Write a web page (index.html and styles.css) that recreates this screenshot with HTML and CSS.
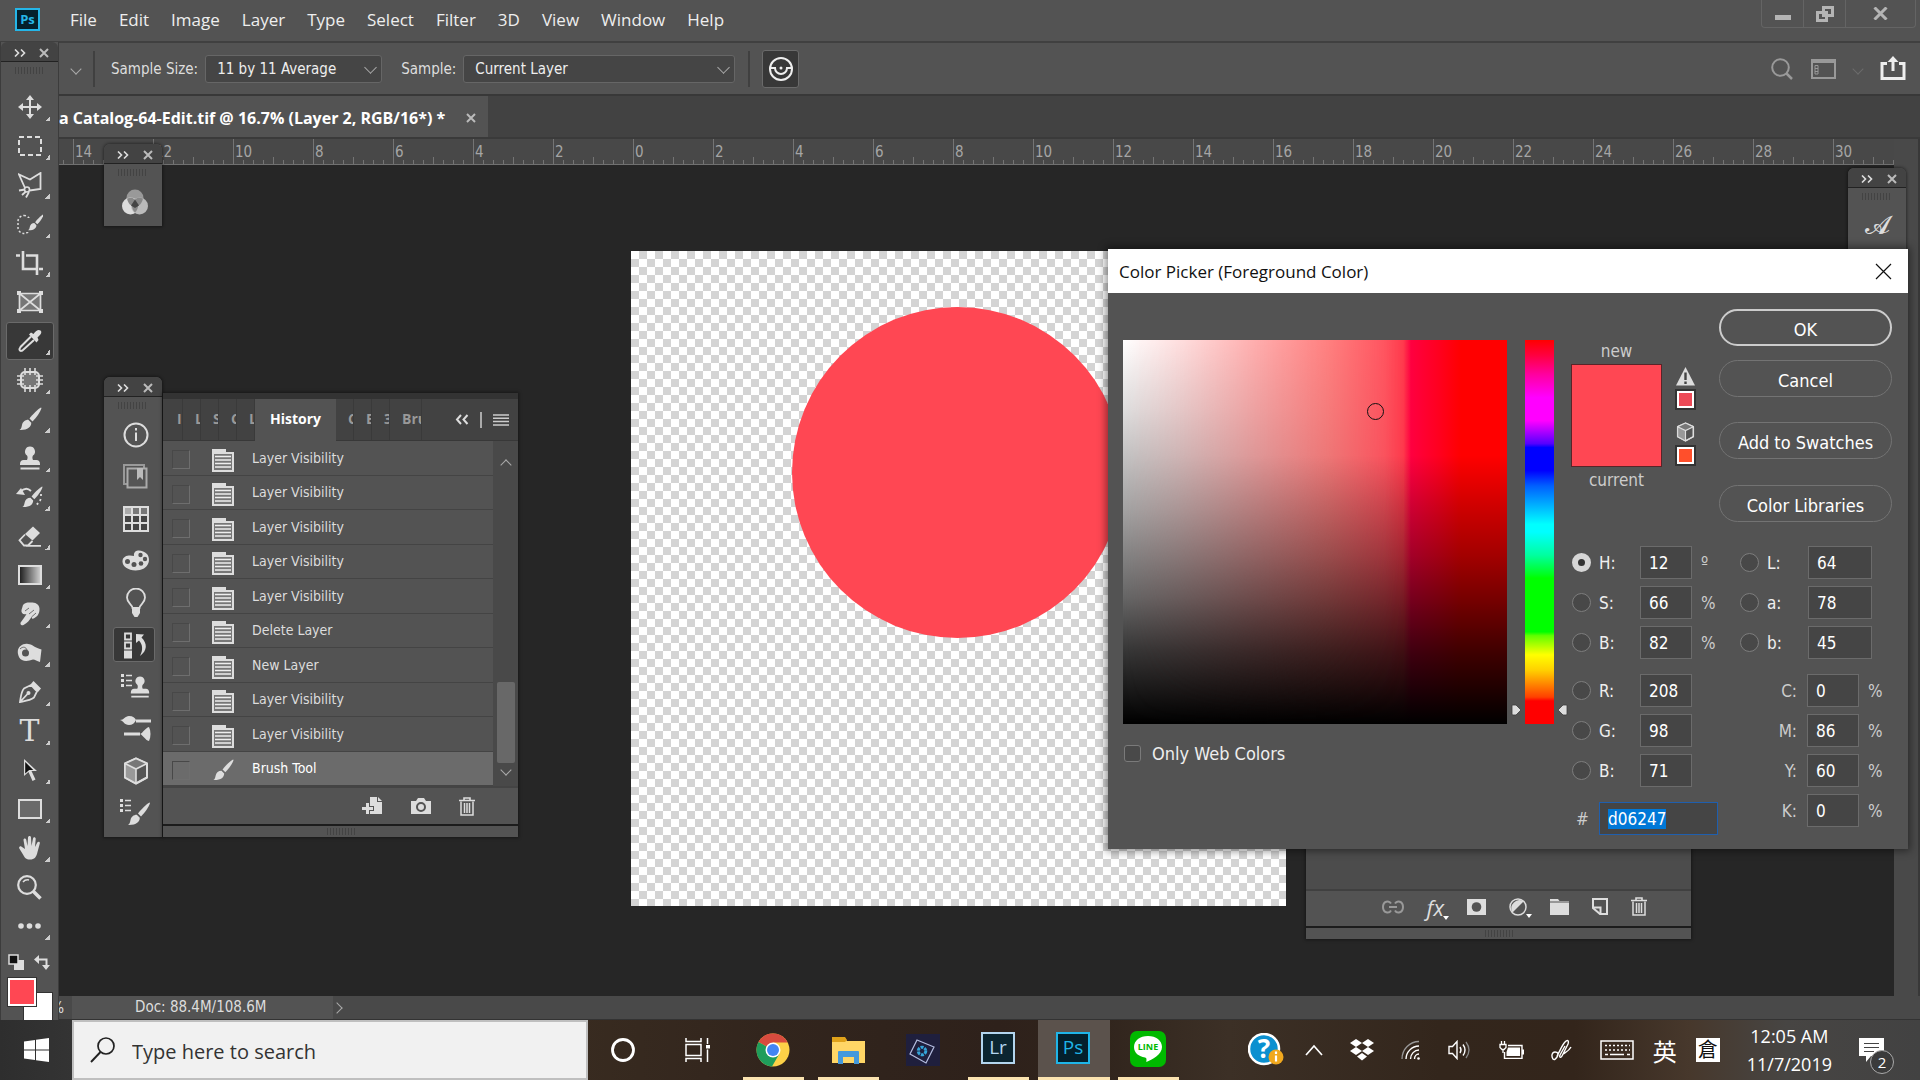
FILE: index.html
```html
<!DOCTYPE html>
<html lang="en">
  <head>
    <meta charset="UTF-8" />
    <meta name="viewport" content="width=device-width, initial-scale=1.0" />
    <title>Photoshop</title>
    <link rel="stylesheet" href="styles.css">
  </head>

  <body>
    <!-- shared icons -->
    <svg class="defs" width="0" height="0">
      <symbol id="i-state" viewBox="0 0 22 24">
        <path d="M0 1h14v3h8v20H0z" fill="#ddd" />
        <path d="M2 6h18v16H2z" fill="#777" />
        <path d="M3 8.500h16M3 12h16M3 15.500h16M3 19h16" stroke="#eee" stroke-width="1.300" />
      </symbol>
      <symbol id="i-brush" viewBox="0 0 24 24">
        <path d="M23 0.500c-3 1.500-9 7.500-11.500 11l3 3C18 11 22.500 5 23.500 1z" fill="#ddd" />
        <path d="M10.300 12.800l3 3c0 4-3.500 7.500-11.800 7.200 2-1.200 2-3 2.500-5 .7-3 3-5.200 6.300-5.200z" fill="#ddd" />
      </symbol>
      <symbol id="i-stamp" viewBox="0 0 24 24">
        <path d="M12 0.500a5 5 0 0 1 3 9c-.8 1-.8 3 0 4.500h3.500c2 0 3.500 1.500 3.500 4v1H2v-1c0-2.500 1.500-4 3.500-4H9c.8-1.500.8-3.500 0-4.500a5 5 0 0 1 3-9zM2.500 21.500h19v2h-19z" fill="#ddd" />
      </symbol>
      <symbol id="i-cube" viewBox="0 0 26 28">
        <path d="M13 1.500l11 5v14l-11 6-11-6v-14z" fill="#555" stroke="#ddd" stroke-width="2" stroke-linejoin="round" />
        <path d="M2 6.500l11 5.500v14.500L2 20.500z" fill="#999" />
        <path d="M2 6.500l11-5 11 5-11 5.500z" fill="#777" />
        <path d="M13 1.500l11 5v14l-11 6-11-6v-14zM2 6.500l11 5.500 11-5.500M13 12v14" fill="none" stroke="#ddd" stroke-width="1.600" />
      </symbol>
      <symbol id="i-trash" viewBox="0 0 16 19">
        <path d="M0 3.500h16M5 3V1h6v2" stroke="#ddd" stroke-width="1.600" fill="none" />
        <path d="M2 4.500v13.500h12V4.500M5.500 6v10M8 6v10M10.500 6v10" stroke="#ddd" stroke-width="1.500" fill="none" />
      </symbol>
      <symbol id="i-list" viewBox="0 0 11 13">
        <path d="M0 1.500h3M0 6.500h3M0 11.500h3" stroke="#ddd" stroke-width="3" />
        <path d="M5 1.500h6M5 6.500h6M5 11.500h6" stroke="#ddd" stroke-width="1.500" />
      </symbol>
      <symbol id="i-collapse" viewBox="0 0 12 8">
        <path d="M1 0.500l3.500 3.500L1 7.500M7 0.500l3.500 3.500L7 7.500" stroke="#ddd" stroke-width="1.600" fill="none" />
      </symbol>
      <symbol id="i-x" viewBox="0 0 10 10">
        <path d="M1 1l8 8M9 1l-8 8" stroke="#bbb" stroke-width="2" fill="none" />
      </symbol>
    </svg>

    <div class="app">
      <header class="menubar">
        <div class="ps-logo">Ps</div>
        <nav class="menu">
          <a href="#">File</a>
          <a href="#">Edit</a>
          <a href="#">Image</a>
          <a href="#">Layer</a>
          <a href="#">Type</a>
          <a href="#">Select</a>
          <a href="#">Filter</a>
          <a href="#">3D</a>
          <a href="#">View</a>
          <a href="#">Window</a>
          <a href="#">Help</a>
        </nav>
        <div class="window-buttons">
          <button aria-label="Minimize"><svg width="16" height="16"><path d="M0 9h16v5H0z" fill="#b4b4b4" /></svg></button>
          <button aria-label="Restore"><svg width="18" height="16"><path d="M7.500 1.500h9v8h-9zM1.500 6.500h9v8h-9z" fill="none" stroke="#b4b4b4" stroke-width="3" /></svg></button>
          <button class="wide" aria-label="Close"><svg width="15" height="13"><path d="M1.500 0.500l12 12M13.500 0.500l-12 12" stroke="#b4b4b4" stroke-width="3" /></svg></button>
        </div>
      </header>

      <div class="options">
        <span class="chevron"></span>
        <span class="divider"></span>
        <label for="sample-size">Sample Size:</label>
        <span class="select size"><select id="sample-size"><option>11 by 11 Average</option></select></span>
        <label for="sample">Sample:</label>
        <span class="select source"><select id="sample"><option>Current Layer</option></select></span>
        <span class="divider"></span>
        <button class="ring-button" aria-label="Show sampling ring">
          <svg width="26" height="26"><circle cx="13" cy="13" r="11" fill="none" stroke="#eee" stroke-width="2" /><path d="M2 12h5a6 6 0 0 0 12 0h5" fill="none" stroke="#eee" stroke-width="2" /><circle cx="13" cy="12" r="1.500" fill="#eee" /></svg>
        </button>
        <div class="options-right">
          <svg width="22" height="22"><circle cx="9.500" cy="9.500" r="8.300" fill="none" stroke="#999" stroke-width="2" /><path d="M15.500 15.500l5.500 5.500" stroke="#999" stroke-width="2.500" /></svg>
          <svg width="25" height="20"><path d="M1 1h23v18H1z" fill="none" stroke="#999" stroke-width="2" /><path d="M1 3h23" stroke="#999" stroke-width="2" /><path d="M4 6.500h3v8.500H4zM4 9.500h3M4 12.500h3" fill="none" stroke="#999" /></svg>
          <span class="chevron dim"></span>
          <svg width="26" height="25"><path d="M7 7.500H2v15h22v-15h-5" fill="none" stroke="#eee" stroke-width="3" /><path d="M13 15V4" stroke="#eee" stroke-width="3" /><path d="M7.500 6L13 0l5.500 6z" fill="#eee" /></svg>
        </div>
      </div>

      <div class="tabs">
        <div class="tab">a Catalog-64-Edit.tif @ 16.7% (Layer 2, RGB/16*) *
          <button aria-label="Close tab"><svg width="10" height="10"><use href="#i-x" /></svg></button>
        </div>
      </div>

      <div class="stage">
        <div class="document">
          <div class="ruler">
            <span>14</span><span>12</span><span>10</span><span>8</span><span>6</span><span>4</span><span>2</span><span>0</span><span>2</span><span>4</span><span>6</span><span>8</span><span>10</span><span>12</span><span>14</span><span>16</span><span>18</span><span>20</span><span>22</span><span>24</span><span>26</span><span>28</span><span>30</span>
          </div>
          <div class="workspace">
            <div class="artboard"><div class="circle"></div></div>
          </div>
        </div>
        <div class="vscroll"></div>
      </div>

      <div class="status">
        <span class="zoom">%</span>
        <span class="doc">Doc: 88.4M/108.6M</span>
        <span class="chevron right"></span>
      </div>

      <!-- tools -->
      <aside class="toolbox">
        <div class="panel-head"><svg width="12" height="8"><use href="#i-collapse" /></svg><svg width="10" height="10"><use href="#i-x" /></svg></div>
        <div class="grip"></div>
        <div class="tools">
          <button aria-label="Move"><svg width="24" height="24" viewBox="0 0 24 24"><path d="M12 3v18M3 12h18" stroke="#ddd" stroke-width="2" /><path d="M12 0l4 5H8zM12 24l4-5H8zM0 12l5-4v8zM24 12l-5-4v8z" fill="#ddd" /></svg></button>
          <button aria-label="Marquee"><svg width="24" height="20" viewBox="0 0 24 20"><rect x="1" y="1" width="22" height="18" fill="none" stroke="#ddd" stroke-width="2" stroke-dasharray="5 3" /></svg></button>
          <button aria-label="Lasso"><svg width="24" height="26" viewBox="0 0 24 26"><path d="M7 16L1 2.500l11 5L22.500 1v16l-11 1.500" fill="none" stroke="#ddd" stroke-width="1.800" /><circle cx="9" cy="17.500" r="2.500" fill="none" stroke="#ddd" stroke-width="1.600" /><path d="M1 18.500l6-1M4 23l4-3.500M11 20l-3 5.500" stroke="#ddd" stroke-width="1.800" /></svg></button>
          <button aria-label="Quick selection"><svg width="26" height="24" viewBox="0 0 26 24"><rect x="1" y="3.500" width="12" height="18" rx="6" fill="none" stroke="#ddd" stroke-width="1.500" stroke-dasharray="2 2" /><path d="M9 6h6v14H9z" fill="#535353" /><use href="#i-brush" x="10" y="0" width="17" height="21" /></svg></button>
          <button aria-label="Crop"><svg width="28" height="26" viewBox="0 0 28 26"><path d="M0 5.500h4M7 1v18h13M10 5.500h11V25M23 19h4" fill="none" stroke="#ddd" stroke-width="2.600" /></svg></button>
          <button class="plain" aria-label="Frame"><svg width="26" height="22" viewBox="0 0 26 22"><path d="M2.500 2.500h21v17h-21zM2.500 2.500l21 17M23.500 2.500l-21 17" fill="#777" stroke="#ddd" stroke-width="1.700" /><path d="M0 0h4v4H0zM22 0h4v4h-4zM0 18h4v4H0zM22 18h4v4h-4z" fill="#ddd" /></svg></button>
          <button class="active" aria-label="Eyedropper"><svg width="24" height="24" viewBox="0 0 24 24"><path d="M13 7.500L2.500 18c-1.500 2-1.500 5 2 3.500L16 11" fill="none" stroke="#ddd" stroke-width="2" /><path d="M11 5.500l2-2 2.500 1.500C18 1.500 20.500 0 22.500 1.500 24.500 3.500 22.500 6 19.500 8.500l1 2.500-2 2.500z" fill="#ddd" /></svg></button>
          <button aria-label="Patch"><svg width="26" height="24" viewBox="0 0 26 24"><rect x="4" y="4" width="18" height="16" rx="4" fill="#777" stroke="#ddd" stroke-width="2" /><path d="M8 0v7M13 0v7M18 0v7M8 17v7M13 17v7M18 17v7M0 8h7M0 12h7M0 16h7M19 8h7M19 12h7M19 16h7" stroke="#ddd" stroke-width="1.600" /></svg></button>
          <button aria-label="Brush"><svg width="24" height="24"><use href="#i-brush" /></svg></button>
          <button aria-label="Stamp"><svg width="24" height="24"><use href="#i-stamp" /></svg></button>
          <button aria-label="History brush"><svg width="28" height="24" viewBox="0 0 28 24"><use href="#i-brush" x="5" y="0" width="22" height="24" /><path d="M4 7c4-4 8-4 11-1" fill="none" stroke="#ddd" stroke-width="1.800" /><path d="M0 9l5-6 4 7z" fill="#ddd" /><path d="M25 9v4c-1 4-3 6-7 8" fill="none" stroke="#ddd" stroke-width="1.800" stroke-dasharray="2 3" /></svg></button>
          <button aria-label="Eraser"><svg width="24" height="21" viewBox="0 0 24 21"><path d="M15 0.500l7 6.500-7.500 7.500-7.500-6.500z" fill="#ddd" /><path d="M7 8.500l-5.500 5.700 4.500 5.300h4l4.500-4.500M8 19.800h15" fill="none" stroke="#ddd" stroke-width="1.800" /></svg></button>
          <button aria-label="Gradient"><span class="gradient-icon"></span></button>
          <button aria-label="Smudge"><svg width="22" height="24" viewBox="0 0 22 24"><path d="M4 3C6 0 10 .5 12 .5c4 0 8 1 8.500 6 .2 5-2 8-5 9.500l-2 1-1-2c-2 3-4 6-8 8-2 1-4-1-2.500-3 2-3 4-5 5.500-8C4 13 2 11 2.500 8z" fill="#ddd" /><path d="M6 9l4-3M10 12l5-4M12.500 15l4.500-4" stroke="#535353" stroke-width=".8" /></svg></button>
          <button aria-label="Sponge"><svg width="25" height="20" viewBox="0 0 25 20"><path d="M1 11C-.5 4 6 0 11 1c5 .5 7 4 13.500 5.500L23 19c-3-1-5-2.500-7-2.500-4 1.500-8 2-11 .5-2.500-1-3.500-3.500-4-6z" fill="#ddd" /><circle cx="8.500" cy="10" r="3.500" fill="#535353" /><path d="M3 6c3-3 6-2 7 1" stroke="#535353" fill="none" stroke-width=".8" /></svg></button>
          <button aria-label="Pen"><svg width="22" height="22" viewBox="0 0 22 22"><path d="M1 21C2 15 2 11 5 7.500L12 4l6 6.500-3 6C11 19.500 6 20 1 21zM1 21l7.500-8" fill="none" stroke="#ddd" stroke-width="1.800" /><circle cx="9.500" cy="12" r="2" fill="#ddd" /><path d="M11.500 3.500l3-3.500 7.500 7.500-3 3.500z" fill="#ddd" /></svg></button>
          <button aria-label="Type"><span class="type-icon">T</span></button>
          <button aria-label="Path selection"><svg width="18" height="24" viewBox="0 0 18 24"><path d="M3 1v17l4.500-4 4 9 3-1.500-4-8.500H16z" fill="#ddd" /><path d="M4.200 4v11.500l4-3.500h4z" fill="#111" /></svg></button>
          <button aria-label="Rectangle"><svg width="24" height="20"><path d="M1 1h22v18H1z" fill="#6a6a6a" stroke="#ddd" stroke-width="2" /></svg></button>
          <button aria-label="Hand"><svg width="22" height="24" viewBox="0 0 22 24"><path d="M6 13L4.500 4c0-2 2.400-2 2.800 0L8.500 10 9 1.500c.2-2 3-2 3 0L12.500 10l1.500-7.500c.5-1.800 2.800-1.500 2.700.5L16 11l2.300-4.500c1-1.500 3-.7 2.500 1L18.500 16c-1 5-3 7.500-7.500 7.500-4 0-5.500-2-7-5L.3 12.500c-.8-1.800 1.500-3 2.700-1.500z" fill="#ddd" /></svg></button>
          <button class="plain" aria-label="Zoom"><svg width="25" height="25" viewBox="0 0 25 25"><circle cx="10" cy="10" r="8.800" fill="none" stroke="#ddd" stroke-width="2.200" /><path d="M6 7a6 6 0 0 1 6-2" stroke="#ddd" stroke-width="1.500" fill="none" /><path d="M16 16l7.500 7.500" stroke="#ddd" stroke-width="3.500" /></svg></button>
          <button aria-label="More tools"><svg width="24" height="6"><circle cx="3" cy="3" r="2.800" fill="#ddd" /><circle cx="11.500" cy="3" r="2.800" fill="#ddd" /><circle cx="20" cy="3" r="2.800" fill="#ddd" /></svg></button>
        </div>
        <div class="swap">
          <svg width="16" height="16"><path d="M6 6h10v10H6z" fill="#ddd" /><path d="M1 1h9v9H1z" fill="#111" stroke="#ddd" stroke-width="1.500" /></svg>
          <svg width="16" height="15"><path d="M3 4.500h9.500V11" fill="none" stroke="#ddd" stroke-width="2" /><path d="M0 4.500L5 0v9zM12 15l-4-5h8z" fill="#ddd" /></svg>
        </div>
        <div class="swatches"><span class="bg"></span><span class="fg"></span></div>
      </aside>

      <!-- floating panels -->
      <aside class="float channels">
        <div class="panel-head"><svg width="12" height="8"><use href="#i-collapse" /></svg><svg width="10" height="10"><use href="#i-x" /></svg></div>
        <div class="grip"></div>
        <svg class="solo" width="26" height="26"><circle cx="13" cy="9" r="8.500" fill="#999" /><circle cx="8.500" cy="17" r="8.500" fill="#ddd" /><circle cx="17.500" cy="17" r="8.500" fill="#bbb" /><path d="M5 9.500c5-2 8 0 8 2 0-2 3-4 8-2-1 5-4 8-8 8s-7-3-8-8z" fill="#888" /><path d="M13 10.500c4 4 4 9 0 13-4-4-4-9 0-13z" fill="#888" /><path d="M13 10.500l4 6-4 2.500-4-2.500z" fill="#444" /></svg>
      </aside>

      <aside class="float glyphs">
        <div class="panel-head"><svg width="12" height="8"><use href="#i-collapse" /></svg><svg width="10" height="10"><use href="#i-x" /></svg></div>
        <div class="grip"></div>
        <span class="script-a">𝓐</span>
      </aside>

      <aside class="float dock">
        <div class="panel-head"><svg width="12" height="8"><use href="#i-collapse" /></svg><svg width="10" height="10"><use href="#i-x" /></svg></div>
        <div class="grip"></div>
        <div class="dock-icons">
          <button aria-label="Info"><svg width="26" height="26"><circle cx="13" cy="13" r="11.500" fill="none" stroke="#ddd" stroke-width="2" /><path d="M13 10.500V19M13 6v2.500" stroke="#ddd" stroke-width="2" /></svg></button>
          <button aria-label="Libraries"><svg width="26" height="25"><path d="M4 20H1V1h20v3" fill="none" stroke="#999" stroke-width="2" /><path d="M4.500 4.500h19v19h-19z" fill="#555" stroke="#aaa" stroke-width="2" /><path d="M14 4h6v12l-3-3-3 3z" fill="#bbb" /></svg></button>
          <button aria-label="Swatches"><svg width="26" height="26"><path d="M1 1h24v24H1z" fill="#444" /><path d="M1 1h8v8H1z" fill="#aaa" /><path d="M9 1h16v8H9z" fill="#777" /><path d="M1 1h24v24H1zM1 9h24M1 17h24M9 1v24M17 1v24" fill="none" stroke="#ddd" stroke-width="2" /></svg></button>
          <button aria-label="Color"><svg width="28" height="21"><path d="M12 6C11-1 20-1 25 4c4 5 2 14-7 16C8 22 0 17 .5 11 1 5 8 5 12 6z" fill="#ddd" /><g fill="#535353"><circle cx="5.500" cy="11.500" r="2.500" /><circle cx="12" cy="14.500" r="2.500" /><circle cx="19" cy="13.500" r="2.300" /><circle cx="23" cy="9" r="2.200" /><circle cx="18.500" cy="5" r="2.200" /></g></svg></button>
          <button aria-label="Learn"><svg width="20" height="30"><path d="M6.500 20C6 16 1 15 1 9.500a9 9 0 0 1 18 0C19 15 14 16 13.500 20z" fill="none" stroke="#ddd" stroke-width="1.800" /><path d="M6 20h8v5l-2.500 4h-3L6 25z" fill="#ddd" /></svg></button>
          <button class="active" aria-label="History"><svg width="24" height="28"><path d="M1 2.500h6v6H1zM1 11.500h6v6H1z" fill="none" stroke="#ddd" stroke-width="1.800" /><path d="M0 19.500h8v8H0z" fill="#ddd" /><path d="M12 3l8 .5-2.500 3c6 6 6 13-1.500 18.500 3-6 3-11-1-15.500L12 12z" fill="#ddd" /></svg></button>
          <button aria-label="Clone source"><svg width="30" height="26"><use href="#i-list" x="0" y="0" width="11" height="13" /><use href="#i-stamp" x="8" y="1" width="22" height="24" /></svg></button>
          <button aria-label="Brush settings"><svg width="32" height="26"><path d="M0 4c4 0 5-4 9-4s6 2 7 4c-1 3-4 5-7 5-5 0-5-4-9-5z" fill="#ddd" /><path d="M16 5h15M4 18h16" stroke="#ddd" stroke-width="2.800" /><path d="M20 18c3-1 5-6 9-7 2 4 2 10 0 14-4-1-6-6-9-7z" fill="#ddd" /></svg></button>
          <button aria-label="3D"><svg width="26" height="28"><use href="#i-cube" /></svg></button>
          <button aria-label="Brushes"><svg width="32" height="27"><use href="#i-list" x="0" y="0" width="11" height="13" /><use href="#i-brush" x="5" y="3" width="27" height="24" /></svg></button>
        </div>
      </aside>

      <section class="float history">
        <div class="history-tabs">
          <span class="cut">I</span><span class="cut">L</span><span class="cut">S</span><span class="cut">C</span><span class="cut">L</span>
          <span class="current">History</span>
          <span class="cut">C</span><span class="cut">E</span><span class="cut">3</span><span class="cut last">Brush</span>
          <span class="tab-tools">
            <svg width="14" height="11"><path d="M6 1L2 5.500 6 10M12.500 1l-4 4.500 4 4.500" fill="none" stroke="#ddd" stroke-width="2" /></svg>
            <span class="bar"></span>
            <svg width="16" height="12"><path d="M0 1h16M0 4.300h16M0 7.600h16M0 11h16" stroke="#ccc" stroke-width="1.500" /></svg>
          </span>
        </div>
        <div class="history-body">
          <ul>
            <li><input type="checkbox" aria-label="Set source"><svg width="22" height="24"><use href="#i-state" /></svg>Layer Visibility</li>
            <li><input type="checkbox" aria-label="Set source"><svg width="22" height="24"><use href="#i-state" /></svg>Layer Visibility</li>
            <li><input type="checkbox" aria-label="Set source"><svg width="22" height="24"><use href="#i-state" /></svg>Layer Visibility</li>
            <li><input type="checkbox" aria-label="Set source"><svg width="22" height="24"><use href="#i-state" /></svg>Layer Visibility</li>
            <li><input type="checkbox" aria-label="Set source"><svg width="22" height="24"><use href="#i-state" /></svg>Layer Visibility</li>
            <li><input type="checkbox" aria-label="Set source"><svg width="22" height="24"><use href="#i-state" /></svg>Delete Layer</li>
            <li><input type="checkbox" aria-label="Set source"><svg width="22" height="24"><use href="#i-state" /></svg>New Layer</li>
            <li><input type="checkbox" aria-label="Set source"><svg width="22" height="24"><use href="#i-state" /></svg>Layer Visibility</li>
            <li><input type="checkbox" aria-label="Set source"><svg width="22" height="24"><use href="#i-state" /></svg>Layer Visibility</li>
            <li class="selected"><input type="checkbox" aria-label="Set source"><svg width="22" height="24"><use href="#i-brush" /></svg>Brush Tool</li>
          </ul>
          <div class="history-scroll"><span class="chevron up"></span><span class="thumb"></span><span class="chevron"></span></div>
        </div>
        <div class="history-foot">
          <button aria-label="New document from state"><svg width="21" height="18"><path d="M8 0h7v5h5v12H8v-3h4V9H8zM16 0l4 4h-4z" fill="#ddd" /><path d="M0 11.500h11M5.500 6v11" stroke="#ddd" stroke-width="3" /></svg></button>
          <button aria-label="New snapshot"><svg width="20" height="16"><path d="M0 3h5l2-3h6l2 3h5v13H0z" fill="#ddd" /><circle cx="10" cy="9" r="4" fill="#ddd" stroke="#535353" stroke-width="2" /></svg></button>
          <button aria-label="Delete"><svg width="16" height="19"><use href="#i-trash" /></svg></button>
        </div>
        <div class="panel-bottom"><span class="grip"></span></div>
      </section>

      <section class="float layers">
        <div class="layers-body"></div>
        <div class="layers-foot">
          <button aria-label="Link"><svg width="22" height="14"><path d="M9 3.500C7 0 1 1 1 7s6 7 8 3.500M13 3.500c2-3.500 8-2.500 8 3.500s-6 7-8 3.500M7 7h8" fill="none" stroke="#999" stroke-width="2" /></svg></button>
          <button class="more fx">fx</button>
          <button aria-label="Mask"><svg width="19" height="16"><path d="M0 0h19v16H0z" fill="#ddd" /><circle cx="9.500" cy="8" r="4.800" fill="#535353" /></svg></button>
          <button class="more" aria-label="Adjustment"><svg width="18" height="18"><circle cx="9" cy="9" r="8" fill="none" stroke="#ddd" stroke-width="1.500" /><path d="M3.500 14.500a8 8 0 0 1 11-11z" fill="#ddd" /></svg></button>
          <button aria-label="Group"><svg width="19" height="17"><path d="M0 1h8l1.500 2H19v14H0z" fill="#ddd" /><path d="M0 4h19" stroke="#535353" /></svg></button>
          <button aria-label="New layer"><svg width="16" height="17"><path d="M1 1h14v15H8L1 10z" fill="none" stroke="#ddd" stroke-width="2" /><path d="M1 9.500h7.500V16" fill="none" stroke="#ddd" stroke-width="2" /></svg></button>
          <button aria-label="Delete"><svg width="16" height="19"><use href="#i-trash" /></svg></button>
        </div>
        <div class="panel-bottom"><span class="grip"></span></div>
      </section>

      <!-- color picker -->
      <form class="dialog">
        <div class="dialog-title">Color Picker (Foreground Color)
          <button type="button" aria-label="Close"><svg width="17" height="17"><path d="M1 1l15 15M16 1L1 16" stroke="#111" stroke-width="1.200" /></svg></button>
        </div>
        <div class="dialog-body">
          <div class="field-column">
            <div class="field"><span class="marker"></span></div>
            <label class="web"><input type="checkbox">Only Web Colors</label>
          </div>
          <div class="hue">
            <input type="range" aria-label="Hue" min="0" max="360" value="12">
            <svg class="arrow left" width="11" height="12"><path d="M1 1.500Q1 1 2 1h3l5 5-5 5H2Q1 11 1 10z" fill="#ddd" stroke="#3b3b3b" stroke-width=".8" /></svg>
            <svg class="arrow right" width="11" height="12"><path d="M10 1.500Q10 1 9 1H6L1 6l5 5h3q1 0 1-1z" fill="#ddd" stroke="#3b3b3b" stroke-width=".8" /></svg>
          </div>
          <div class="settings">
            <div class="top">
              <div class="preview"><span>new</span><div class="color"></div><span>current</span></div>
              <div class="warnings">
                <svg width="19" height="19"><path d="M9.500 0L19 18.500H0z" fill="#ddd" /><path d="M9.500 5.500V13M9.500 14.500v2.500" stroke="#444" stroke-width="2.400" /></svg>
                <button type="button" class="mini gamut" aria-label="Use gamut color"></button>
                <svg width="19" height="20"><use href="#i-cube" /></svg>
                <button type="button" class="mini websafe" aria-label="Use web color"></button>
              </div>
              <div class="actions">
                <button type="button" class="ok">OK</button>
                <button type="button" class="cancel">Cancel</button>
                <button type="button">Add to Swatches</button>
                <button type="button" class="libraries">Color Libraries</button>
              </div>
            </div>
            <div class="values">
              <div class="hsb-rgb">
                <div class="group">
                  <div class="row"><input type="radio" name="mode" id="m-h" checked><label for="m-h">H:</label><input type="text" aria-label="H" value="12"><span>º</span></div>
                  <div class="row"><input type="radio" name="mode" id="m-s"><label for="m-s">S:</label><input type="text" aria-label="S" value="66"><span>%</span></div>
                  <div class="row"><input type="radio" name="mode" id="m-v"><label for="m-v">B:</label><input type="text" aria-label="Brightness" value="82"><span>%</span></div>
                </div>
                <div class="group">
                  <div class="row"><input type="radio" name="mode" id="m-r"><label for="m-r">R:</label><input type="text" aria-label="R" value="208"></div>
                  <div class="row"><input type="radio" name="mode" id="m-g"><label for="m-g">G:</label><input type="text" aria-label="G" value="98"></div>
                  <div class="row"><input type="radio" name="mode" id="m-b"><label for="m-b">B:</label><input type="text" aria-label="Blue" value="71"></div>
                </div>
                <div class="hex"><label for="hex">#</label><input type="text" id="hex" value="d06247" spellcheck="false"></div>
              </div>
              <div class="lab-cmyk">
                <div class="group">
                  <div class="row wide"><input type="radio" name="mode" id="m-l"><label for="m-l">L:</label><input type="text" aria-label="L" value="64"></div>
                  <div class="row wide"><input type="radio" name="mode" id="m-a"><label for="m-a">a:</label><input type="text" aria-label="a" value="78"></div>
                  <div class="row wide"><input type="radio" name="mode" id="m-lb"><label for="m-lb">b:</label><input type="text" aria-label="b" value="45"></div>
                </div>
                <div class="group cmyk">
                  <div class="row"><label for="c-c">C:</label><input type="text" id="c-c" value="0"><span>%</span></div>
                  <div class="row"><label for="c-m">M:</label><input type="text" id="c-m" value="86"><span>%</span></div>
                  <div class="row"><label for="c-y">Y:</label><input type="text" id="c-y" value="60"><span>%</span></div>
                  <div class="row"><label for="c-k">K:</label><input type="text" id="c-k" value="0"><span>%</span></div>
                </div>
              </div>
            </div>
          </div>
        </div>
      </form>
    </div>

    <footer class="taskbar">
      <button class="start" aria-label="Start"><svg width="25" height="24"><path d="M0 3.500L11 2v9.500H0zM12 1.800L25 0v11.500H12zM0 12.500h11V22L0 20.500zM12 12.500h13V24l-13-1.800z" fill="#fff" /></svg></button>
      <label class="search">
        <svg width="26" height="26"><circle cx="16" cy="9" r="8" fill="none" stroke="#222" stroke-width="1.700" /><path d="M10.500 15L1 25" stroke="#222" stroke-width="1.900" /></svg>
        <input type="text" placeholder="Type here to search" aria-label="Type here to search">
      </label>
      <div class="apps">
        <button aria-label="Cortana"><svg width="24" height="24"><circle cx="12" cy="12" r="10.500" fill="none" stroke="#fff" stroke-width="2.800" /></svg></button>
        <button aria-label="Task view"><svg width="26" height="24"><path d="M1 0v3.500h15V0M1 6.500h15v11H1zM1 24v-3.500h15V24M22.500 0v6M22.500 11.500V24" fill="none" stroke="#fff" stroke-width="1.500" /><path d="M21 7h4v3.500h-4z" fill="#fff" /></svg></button>
        <button class="running" aria-label="Chrome"><svg width="34" height="34"><circle cx="17" cy="17" r="16.500" fill="#fdd147" /><path d="M17 17L2.500 9A16.500 16.500 0 0 1 31.500 9.500H17z" fill="#d84b3e" /><path d="M17 17L2.500 9A16.500 16.500 0 0 0 16 33.500l7.500-13z" fill="#1f9d5b" /><circle cx="17" cy="17" r="7.500" fill="#fff" /><circle cx="17" cy="17" r="6" fill="#4285f4" /></svg></button>
        <button class="running" aria-label="Explorer"><svg width="33" height="27"><path d="M0 1h13l2 3h18v22H0z" fill="#ffd666" /><path d="M0 0h13l2 3-2 2H0z" fill="#e0a21a" /><path d="M6 27V15q0-1 1-1h19q1 0 1 1v12h-5v-7H11v7z" fill="#4499dc" /></svg></button>
        <button aria-label="Photoshop Elements"><svg width="34" height="32"><path d="M0 0h34v32H0z" fill="#1f1f3d" /><path d="M11 6l17 7-8 16-16-9z" fill="none" stroke="#b4bde0" stroke-width="1.200" /><circle cx="16" cy="17" r="3.800" fill="none" stroke="#35a4d8" stroke-width="3" stroke-dasharray="3 1" /></svg></button>
        <button class="running" aria-label="Lightroom"><span class="tile lr">Lr</span></button>
        <button class="running open" aria-label="Photoshop"><span class="tile ps">Ps</span></button>
        <button class="running" aria-label="LINE"><span class="tile line"><svg width="36" height="36"><path d="M18 5C10 5 4 9.500 4 16c0 6 5 9.500 11 10.500 2 .5 1.500 2 1.300 4.500C22 29 32 23.500 32 16 32 9.500 26 5 18 5z" fill="#fff" /></svg><b>LINE</b></span></button>
      </div>
      <div class="tray">
        <svg class="help" width="36" height="34"><circle cx="16" cy="16" r="15" fill="#0b90d0" stroke="#fff" stroke-width="2.500" /><text x="16" y="25" class="q">?</text><circle cx="28" cy="24" r="7.500" fill="#f0a81e" /><path d="M28 18.500v2.500M28 22.500v6" stroke="#fff" stroke-width="2.200" /></svg>
        <svg width="18" height="12"><path d="M1 11l8-9 8 9" fill="none" stroke="#fff" stroke-width="1.700" /></svg>
        <svg width="24" height="22"><path d="M6 0l6 4-6 4-6-4zM18 0l6 4-6 4-6-4zM6 8l6 4-6 4-6-4zM18 8l6 4-6 4-6-4zM12 14l5 3.500-5 4-5-4z" fill="#fff" /></svg>
        <svg width="20" height="20"><path d="M1 19C1 9 9 1.500 18 1.500" fill="none" stroke="#999" stroke-width="1.300" /><path d="M5 19C5 12 11 6 18 6M9.500 19c0-5 4-9 8.500-9M13.500 19c0-3 2-5 4.500-5" fill="none" stroke="#fff" stroke-width="1.400" /><circle cx="17.500" cy="18.500" r="1.300" fill="#fff" /></svg>
        <svg width="24" height="20"><path d="M1 6.500h3.500L9 1.500v17l-4.500-5H1z" fill="none" stroke="#fff" stroke-width="1.400" /><path d="M12 7q2 3 0 6M15 4.500q4 5.500 0 11" fill="none" stroke="#fff" stroke-width="1.400" /><path d="M18 2q6 8 0 16" fill="none" stroke="#888" stroke-width="1.300" /></svg>
        <svg width="25" height="18"><path d="M9 6.500h12V15H7.500v-4z" fill="#fff" /><path d="M5.500 11v6.500H23v-13H9" fill="none" stroke="#fff" stroke-width="1.400" /><path d="M24 8.500v5" stroke="#fff" stroke-width="2" /><path d="M1 3.500h6v3L5 8.500H3l-2-2zM2.500 0v3M5.500 0v3M4 8v4" fill="none" stroke="#fff" stroke-width="1.300" /></svg>
        <svg width="22" height="22"><path d="M2 20c-2-3-1-7 2-7s4 2 2 5-3 3-4 2zM6 17C9 12 11 6 14 3s4-1 3 2l-6 12c-1 2-3 2-2-1l5-9M12 15c3-2 6-3 8-7" fill="none" stroke="#fff" stroke-width="1.400" /></svg>
        <svg width="34" height="20"><path d="M1 1h32v18H1z" fill="none" stroke="#fff" stroke-width="1.500" /><path d="M5 5.500h25M5 10h25" stroke="#fff" stroke-width="1.600" stroke-dasharray="2 2" /><path d="M5 14.500h3M10 14.500h14M27 14.500h3" stroke="#fff" stroke-width="1.500" /></svg>
        <span class="ime">英</span>
        <span class="ime-box">倉</span>
        <div class="clock"><span>12:05 AM</span><span>11/7/2019</span></div>
        <button class="notify" aria-label="Notifications"><svg width="26" height="24"><path d="M0 0h25v18H12l-5 6v-6H0z" fill="#fff" /><path d="M5 5.500h15M5 9.500h15M5 13.500h10" stroke="#444" stroke-width="1.200" /></svg><span class="count">2</span></button>
      </div>
    </footer>

    <script>
      // the hex value starts out selected, ready to be typed over
      const hex = document.getElementById("hex");
      hex.focus();
      hex.select();
    </script>
  </body>
</html>
```
FILE: styles.css
```css
* {
  box-sizing: border-box;
}

body {
  margin: 0;
  height: 100vh;
  display: flex;
  flex-direction: column;
  overflow: hidden;
  background-color: #262626;
  color: #ddd;
  font-family: "DejaVu Sans Condensed", "Noto Sans", sans-serif;
  font-size: 15px;
}

button,
input,
select {
  font: inherit;
  color: inherit;
  background: none;
  border: none;
  margin: 0;
  padding: 0;
}

svg {
  display: block;
  flex-shrink: 0;
}

.defs {
  position: absolute;
}

.app {
  position: relative;
  flex: 1;
  min-height: 0;
  display: flex;
  flex-direction: column;
}

/* menu bar */
.menubar {
  height: 43px;
  display: flex;
  align-items: center;
  background-color: #535353;
  border-bottom: 2px solid #404040;
  padding: 0 4px 2px 15px;
}

.ps-logo {
  width: 25px;
  height: 23px;
  border: 2px solid #25b6e8;
  background-color: #04202c;
  color: #25b6e8;
  font: bold 13px/18px "Open Sans", sans-serif;
  text-align: center;
}

.menu {
  display: flex;
  gap: 22px;
  margin-left: 30px;
  font-family: "Open Sans", sans-serif;
  font-size: 17px;
}

.menu a {
  color: #eee;
  text-decoration: none;
}

.window-buttons {
  display: flex;
  align-self: flex-start;
  height: 28px;
  margin-left: auto;
  border: 1px solid #646464;
  border-top: none;
  border-radius: 0 0 4px 4px;
}

.window-buttons button {
  width: 42px;
  display: flex;
  align-items: center;
  justify-content: center;
  border-right: 1px solid #646464;
}

.window-buttons .wide {
  width: 69px;
  border-right: none;
}

/* options bar */
.options {
  height: 53px;
  display: flex;
  align-items: center;
  background-color: #535353;
  border-bottom: 2px solid #383838;
  padding: 0 14px 0 72px;
  font-size: 15px;
}

.chevron {
  width: 8px;
  height: 8px;
  border: solid #aaa;
  border-width: 0 1px 1px 0;
  transform: rotate(45deg);
}

.chevron.up {
  transform: rotate(225deg);
}

.chevron.right {
  transform: rotate(-45deg);
}

.chevron.dim {
  border-color: #6c6c6c;
}

.divider {
  width: 2px;
  height: 36px;
  background-color: #404040;
  margin: 0 16px 0 13px;
}

.select {
  position: relative;
  height: 28px;
  margin: 0 19px 0 7px;
}

.select.size {
  width: 177px;
}

.select.source {
  width: 272px;
  margin-right: 0;
}

.select::after {
  content: "";
  position: absolute;
  right: 7px;
  top: 8px;
  width: 8px;
  height: 8px;
  border: solid #aaa;
  border-width: 0 1px 1px 0;
  transform: rotate(45deg);
}

.select select {
  width: 100%;
  height: 100%;
  appearance: none;
  background-color: #454545;
  border: 1px solid #666;
  border-radius: 3px;
  color: #eee;
  padding-left: 11px;
}

.ring-button {
  width: 37px;
  height: 38px;
  display: flex;
  align-items: center;
  justify-content: center;
  background-color: #383838;
  border: 1px solid #6a6a6a;
  border-radius: 3px;
  margin-left: -4px;
}

.options-right {
  display: flex;
  align-items: center;
  gap: 18px;
  margin-left: auto;
}

/* document tab and ruler */
.tabs {
  height: 43px;
  display: flex;
  background-color: #424242;
  border-bottom: 2px solid #3a3a3a;
}

.tab {
  display: flex;
  align-items: center;
  gap: 21px;
  width: 488px;
  padding: 2px 0 0 59px;
  background-color: #535353;
  color: #fff;
  font: bold 16px "Open Sans", sans-serif;
  white-space: nowrap;
}

.stage {
  flex: 1;
  min-height: 0;
  display: flex;
  padding-left: 58px;
}

.document {
  flex: 1;
  min-width: 0;
  display: flex;
  flex-direction: column;
}

.vscroll {
  width: 26px;
  background-color: #494949;
  border-right: 2px solid #383838;
}

.ruler {
  height: 26px;
  display: flex;
  overflow: hidden;
  padding-left: 15px;
  border-bottom: 1px solid #707070;
  background-color: #484848;
  background-image:
    repeating-linear-gradient(90deg, #747474 0 1px, transparent 1px 40px),
    repeating-linear-gradient(90deg, #747474 0 1px, transparent 1px 10px);
  background-size: 2000px 7px, 2000px 4px;
  background-position: -25px 100%, -25px 100%;
  background-repeat: no-repeat;
}

.ruler span {
  flex: 0 0 80px;
  border-left: 1px solid #747474;
  padding-left: 1px;
  color: #a5a5a5;
  font-size: 15px;
  line-height: 26px;
}

.workspace {
  position: relative;
  flex: 1;
  background-color: #262626;
}

.artboard {
  position: absolute;
  left: 573px;
  top: 86px;
  width: 655px;
  height: 655px;
  background: repeating-conic-gradient(#d4d4d4 0 25%, #fff 0 50%) 0 0 / 16px 16px;
}

.circle {
  width: 331px;
  height: 331px;
  margin: 56px 0 0 161px;
  border-radius: 50%;
  background-color: #ff4753;
}

.status {
  height: 24px;
  display: flex;
  align-items: center;
  background-color: #494949;
  border-bottom: 1px solid #333;
  padding-left: 58px;
  font-size: 15px;
}

.status .zoom {
  width: 14px;
  display: flex;
  justify-content: flex-end;
  padding-right: 8px;
  overflow: hidden;
}

.status .doc {
  align-self: stretch;
  width: 261px;
  background-color: #535353;
  padding-left: 63px;
  line-height: 23px;
}

/* panels */
.panel-head {
  height: 20px;
  display: flex;
  align-items: center;
  justify-content: space-between;
  padding: 2px 9px 0 13px;
  background-color: #434343;
  border-bottom: 1px solid #222;
  border-radius: 6px 6px 0 0;
}

.grip {
  display: block;
  width: 28px;
  height: 7px;
  margin: 5px auto 0 14px;
  background: repeating-linear-gradient(90deg, #434343 0 1px, transparent 1px 3px);
}

.float,
.toolbox {
  position: absolute;
  background-color: #535353;
}

.float {
  box-shadow: 0 0 3px 1px rgba(0, 0, 0, 0.4);
}

.toolbox {
  left: 0;
  top: 42px;
  bottom: 0;
  width: 59px;
  border-left: 1px solid #3c3c3c;
  border-right: 1px solid #3c3c3c;
  display: flex;
  flex-direction: column;
}

.tools {
  display: flex;
  flex-direction: column;
  gap: 1px;
  margin: 14px 4px 0 5px;
}

.tools button {
  position: relative;
  height: 38px;
  padding-right: 1px;
  display: flex;
  align-items: center;
  justify-content: center;
  border: 1px solid transparent;
  border-radius: 3px;
}

.tools button::after {
  content: "";
  position: absolute;
  right: 3px;
  bottom: 4px;
  width: 5px;
  height: 5px;
  background: linear-gradient(135deg, transparent 50%, #ccc 50%);
}

.tools .plain::after {
  display: none;
}

.tools .active,
.dock-icons .active {
  background-color: #383838;
  border: 1px solid #6a6a6a;
}

.gradient-icon {
  width: 24px;
  height: 20px;
  border: 2px solid #ddd;
  background: linear-gradient(90deg, #222, #ccc);
}

.type-icon {
  font: 30px/30px "DejaVu Serif", serif;
  color: #ddd;
}

.swap {
  display: flex;
  align-items: center;
  gap: 10px;
  margin: 9px 0 0 7px;
}

.swatches {
  position: relative;
  flex: 1;
  margin: 7px 0 0 6px;
  overflow: hidden;
}

.swatches span {
  position: absolute;
  width: 30px;
  height: 30px;
  border: 1px solid #333;
}

.swatches .fg {
  left: 0;
  top: 0;
  background-color: #ff4753;
  box-shadow: inset 0 0 0 2px #fff;
}

.swatches .bg {
  left: 16px;
  top: 15px;
  background-color: #fff;
}

.channels {
  left: 104px;
  top: 144px;
  width: 58px;
  height: 82px;
  border-radius: 6px 6px 0 0;
}

.solo {
  margin: 13px 0 0 18px;
}

.glyphs {
  left: calc(100% - 72px);
  top: 168px;
  width: 58px;
  height: 100px;
  border-radius: 6px 6px 0 0;
}

.script-a {
  display: block;
  margin-top: 8px;
  text-align: center;
  font: 26px/34px "DejaVu Serif", "DejaVu Sans", serif;
}

.dock {
  left: 104px;
  top: 377px;
  width: 58px;
  height: 460px;
  border-radius: 6px 6px 0 0;
}

.dock-icons {
  display: flex;
  flex-direction: column;
  gap: 7px;
  margin: 8px 7px 0 9px;
}

.dock-icons button {
  height: 35px;
  display: flex;
  align-items: center;
  justify-content: center;
  padding-left: 3px;
  border: 1px solid transparent;
  border-radius: 3px;
}

/* history */
.history {
  left: 163px;
  top: 393px;
  width: 355px;
  height: 444px;
  display: flex;
  flex-direction: column;
  border-top: 6px solid #333;
}

.history-tabs {
  height: 42px;
  display: flex;
  background-color: #424242;
  border-bottom: 1px solid #383838;
  padding-left: 2px;
  font: bold 14px/40px "Open Sans", sans-serif;
  color: #999;
}

.cut {
  width: 18px;
  padding-left: 12px;
  overflow: hidden;
  border-right: 1px solid #3a3a3a;
}

.cut.last {
  width: 32px;
}

.current {
  width: 81px;
  height: 42px;
  background-color: #535353;
  color: #fff;
  text-align: center;
}

.tab-tools {
  display: flex;
  align-items: center;
  gap: 11px;
  margin-left: auto;
  padding-right: 9px;
}

.bar {
  width: 2px;
  height: 16px;
  background-color: #aaa;
}

.history-body {
  flex: 1;
  display: flex;
  min-height: 0;
}

.history ul {
  flex: 1;
  display: flex;
  flex-direction: column;
  list-style: none;
  margin: 0;
  padding: 0;
}

.history li {
  flex: 1;
  display: flex;
  align-items: center;
  border-bottom: 1px solid #444;
  padding-left: 9px;
  font-size: 14px;
}

.history li svg {
  margin: 4px 18px 0 22px;
}

.history li input {
  appearance: none;
  width: 18px;
  height: 19px;
  margin-top: 4px;
  border: 1px solid #484848;
  border-right-color: #6e6e6e;
  border-bottom-color: #6e6e6e;
}

.history .selected {
  background-color: #6b6b6b;
  color: #fff;
}

.history-scroll {
  width: 25px;
  display: flex;
  flex-direction: column;
  align-items: center;
  background-color: #494949;
  padding: 20px 0 12px;
}

.thumb {
  width: 18px;
  height: 81px;
  margin: auto 0 3px;
  border-radius: 2px;
  background-color: #686868;
}

.history-foot {
  height: 38px;
  display: flex;
  align-items: center;
  justify-content: flex-end;
  gap: 28px;
  padding-right: 43px;
  border-top: 2px solid #444;
}

.panel-bottom {
  height: 13px;
  border-top: 2px solid #1c1c1c;
}

.panel-bottom .grip {
  margin: 2px auto 0;
}

/* layers */
.layers {
  left: 1306px;
  top: 700px;
  width: 385px;
  height: 239px;
  display: flex;
  flex-direction: column;
}

.layers-body {
  flex: 1;
  background-color: #4c4c4c;
}

.layers-foot {
  height: 37px;
  display: flex;
  align-items: center;
  justify-content: flex-end;
  gap: 23px;
  padding: 0 44px 4px 0;
  border-top: 2px solid #404040;
}

.more {
  position: relative;
}

.more::after {
  content: "";
  position: absolute;
  right: -5px;
  bottom: -2px;
  border: solid transparent;
  border-width: 4px 3px 0;
  border-top-color: #fff;
}

.fx {
  font: italic 22px/22px "Open Sans", sans-serif;
}

/* color picker */
.dialog {
  position: absolute;
  right: 12px;
  top: 249px;
  width: 800px;
  background-color: #535353;
  box-shadow: 0 0 8px 2px rgba(0, 0, 0, 0.45);
  font-size: 17px;
  color: #eee;
}

.dialog-title {
  height: 44px;
  display: flex;
  align-items: center;
  justify-content: space-between;
  padding: 0 16px 0 11px;
  background-color: #fff;
  color: #111;
  font-family: "Open Sans", sans-serif;
  font-size: 17px;
}

.dialog-body {
  display: flex;
  padding: 16px 16px 14px 15px;
}

.field-column {
  width: 384px;
  margin-top: 31px;
}

/* two opaque shades of the same ramp, cross-faded left to right */
.field {
  --ramp: linear-gradient(90deg, #fff 0%, #ffdede 15%, #ffacac 35%, #ff7e7e 54%, #ff5560 68%, #ff3a4c 73%, #ff0040 75%, #ff0020 82%, #ff0000 88%);
  position: relative;
  height: 384px;
  background:
    linear-gradient(transparent, rgba(0, 0, 0, 0.13) 18%, rgba(0, 0, 0, 0.36) 44%, rgba(0, 0, 0, 0.6) 67%, rgba(0, 0, 0, 0.79) 81%, #000),
    var(--ramp);
}

.field::before {
  content: "";
  position: absolute;
  inset: 0;
  background:
    linear-gradient(transparent 30%, rgba(0, 0, 0, 0.2) 44%, rgba(0, 0, 0, 0.36) 56%, rgba(0, 0, 0, 0.53) 67%, rgba(0, 0, 0, 0.75) 81%, #000),
    var(--ramp);
  mask-image: linear-gradient(90deg, transparent, #000 75%);
}

.marker {
  position: absolute;
  left: 244px;
  top: 63px;
  width: 17px;
  height: 17px;
  border: 1px solid #111;
  border-radius: 50%;
}

.web {
  display: flex;
  align-items: center;
  gap: 11px;
  margin: 19px 0 0 1px;
  font-size: 18px;
}

.web input {
  appearance: none;
  width: 17px;
  height: 17px;
  border: 1px solid #7a7a7a;
  border-radius: 3px;
  background-color: #494949;
}

.hue {
  position: relative;
  width: 29px;
  height: 384px;
  margin: 31px 17px 0 18px;
}

.hue input {
  appearance: none;
  writing-mode: vertical-lr;
  width: 29px;
  height: 384px;
  background: linear-gradient(#f00, #ff0040 4%, #ff00a0 9%, #f0f 15%, #f0f 21%, #5500ff 27%, #00f 28%, #00f 34%, #0060ff 38%, #0ff 48%, #0ff 50%, #00ffa0 56%, #00ff20 61%, #0f0 62%, #0f0 76%, #60ff00 77%, #ff0 82%, #ffd000 86%, #ff4000 93%, #f00 94%);
}

.hue input::-webkit-slider-thumb {
  appearance: none;
  width: 1px;
  height: 1px;
}

.arrow {
  position: absolute;
  top: 364px;
}

.arrow.left {
  left: -14px;
}

.arrow.right {
  right: -14px;
}

.settings {
  flex: 1;
}

.top {
  display: flex;
}

.preview {
  width: 91px;
  margin-top: 29px;
  text-align: center;
  line-height: 26px;
  color: #ccc;
}

.preview span {
  display: block;
}

.color {
  height: 103px;
  border: 1px solid #5a2428;
  background-color: #ff4753;
}

.warnings {
  display: flex;
  flex-direction: column;
  align-items: center;
  gap: 3px;
  width: 21px;
  margin: 58px 0 0 13px;
}

.mini {
  width: 21px;
  height: 21px;
  border: 2px solid #333;
  box-shadow: inset 0 0 0 2px #fff;
}

.gamut {
  background-color: #ed4a57;
  margin-bottom: 9px;
}

.websafe {
  background-color: #ff4f2b;
}

.actions {
  display: flex;
  flex-direction: column;
  width: 173px;
  margin-left: auto;
  font-size: 18px;
}

.actions button {
  height: 37px;
  border: 1px solid #737373;
  border-radius: 19px;
  color: #fff;
  padding-top: 4px;
  margin-bottom: 26px;
}

.actions .ok {
  border: 2px solid #ccc;
  margin-bottom: 14px;
}

.actions .cancel {
  margin-bottom: 25px;
}

.actions .libraries {
  margin-bottom: 24px;
}

.values {
  display: flex;
}

.hsb-rgb {
  width: 168px;
}

.group {
  display: flex;
  flex-direction: column;
  gap: 7px;
  margin-bottom: 15px;
}

.row {
  display: flex;
  align-items: center;
}

.row label {
  width: 41px;
}

.row input[type="text"],
.hex input {
  width: 52px;
  height: 33px;
  padding-left: 8px;
  border: 1px solid #6b6b6b;
  background-color: #454545;
  color: #fff;
}

.row.wide input[type="text"] {
  width: 64px;
}

.row span {
  margin-left: 9px;
  color: #ccc;
}

.row input[type="radio"] {
  appearance: none;
  width: 19px;
  height: 19px;
  margin: 0 8px 0 1px;
  border: 1px solid #7d7d7d;
  border-radius: 50%;
  background-color: #484848;
}

.row input[type="radio"]:checked {
  border: 6px solid #d6d6d6;
  background-color: #333;
}

.hex {
  display: flex;
  align-items: center;
  gap: 8px;
  padding-left: 5px;
}

.hex label {
  width: 15px;
  color: #ccc;
}

.hex input {
  width: 119px;
  border-color: #1f5fae;
  outline: none;
}

.hex input::selection {
  background-color: #0078d7;
  color: #fff;
}

.cmyk {
  margin-bottom: 0;
}

.cmyk label {
  width: 58px;
  margin-right: 10px;
  text-align: right;
  color: #ccc;
}

/* taskbar */
.taskbar {
  height: 60px;
  display: flex;
  background: linear-gradient(90deg, #2e2e2e 0, #343434 4%, #382b20 30%, #32251d 40%, #2e211b 52%, #30241c 57%, #3c3026 64%, #33261c 75%, #33251b 82%, #47382c 88%, #474543 93%, #424242);
  color: #fff;
}

.start {
  width: 72px;
  display: flex;
  align-items: center;
  justify-content: center;
}

.search {
  width: 516px;
  display: flex;
  align-items: center;
  gap: 16px;
  padding-left: 16px;
  border: 2px solid #bfbfbf;
  background-color: #f1f1f1;
}

.search input {
  flex: 1;
  padding-top: 2px;
  font: 20px "Open Sans", sans-serif;
  color: #222;
}

.search input::placeholder {
  color: #333;
}

.apps {
  display: flex;
  gap: 3px;
}

.apps button {
  position: relative;
  width: 72px;
  padding-right: 2px;
  display: flex;
  align-items: center;
  justify-content: center;
}

.apps .running::after {
  content: "";
  position: absolute;
  left: 5px;
  right: 6px;
  bottom: 0;
  height: 3px;
  background-color: #fbe3b0;
}

.apps .open {
  background-color: #5b524c;
}

.apps .open::after {
  left: 0;
  right: 0;
}

.tile {
  position: relative;
  width: 34px;
  height: 32px;
  margin-bottom: 4px;
  border: 2px solid;
  font: 19px/27px "Open Sans", sans-serif;
  text-align: center;
}

.lr {
  color: #b3d5ee;
  background-color: #0b2530;
}

.ps {
  color: #1fb5e8;
  background-color: #04202c;
}

.line {
  width: 36px;
  height: 36px;
  margin-bottom: 2px;
  border: none;
  border-radius: 7px;
  background-color: #00b900;
}

.line b {
  position: absolute;
  left: 0;
  right: 0;
  top: 9px;
  color: #00b900;
  font: bold 9px/14px "Open Sans", sans-serif;
}

.tray {
  display: flex;
  align-items: center;
  gap: 27px;
  margin-left: auto;
  padding-right: 35px;
}

.help {
  margin-right: -6px;
}

.q {
  font: bold 26px "Open Sans", sans-serif;
  fill: #fff;
  text-anchor: middle;
}

.ime {
  font: 24px "Noto Sans CJK TC", sans-serif;
  margin-left: -8px;
}

.ime-box {
  width: 24px;
  height: 24px;
  margin-left: -8px;
  background-color: #fff;
  color: #111;
  font: 20px/22px "Noto Sans CJK TC", sans-serif;
  text-align: center;
}

.clock {
  display: flex;
  flex-direction: column;
  align-items: center;
  font: 18px/28px "Open Sans", sans-serif;
}

.notify {
  position: relative;
}

.count {
  position: absolute;
  left: 11px;
  top: 12px;
  width: 24px;
  height: 24px;
  border: 1px solid #aaa;
  border-radius: 50%;
  background-color: #3b3b3b;
  font: 15px/22px "Open Sans", sans-serif;
}
```
